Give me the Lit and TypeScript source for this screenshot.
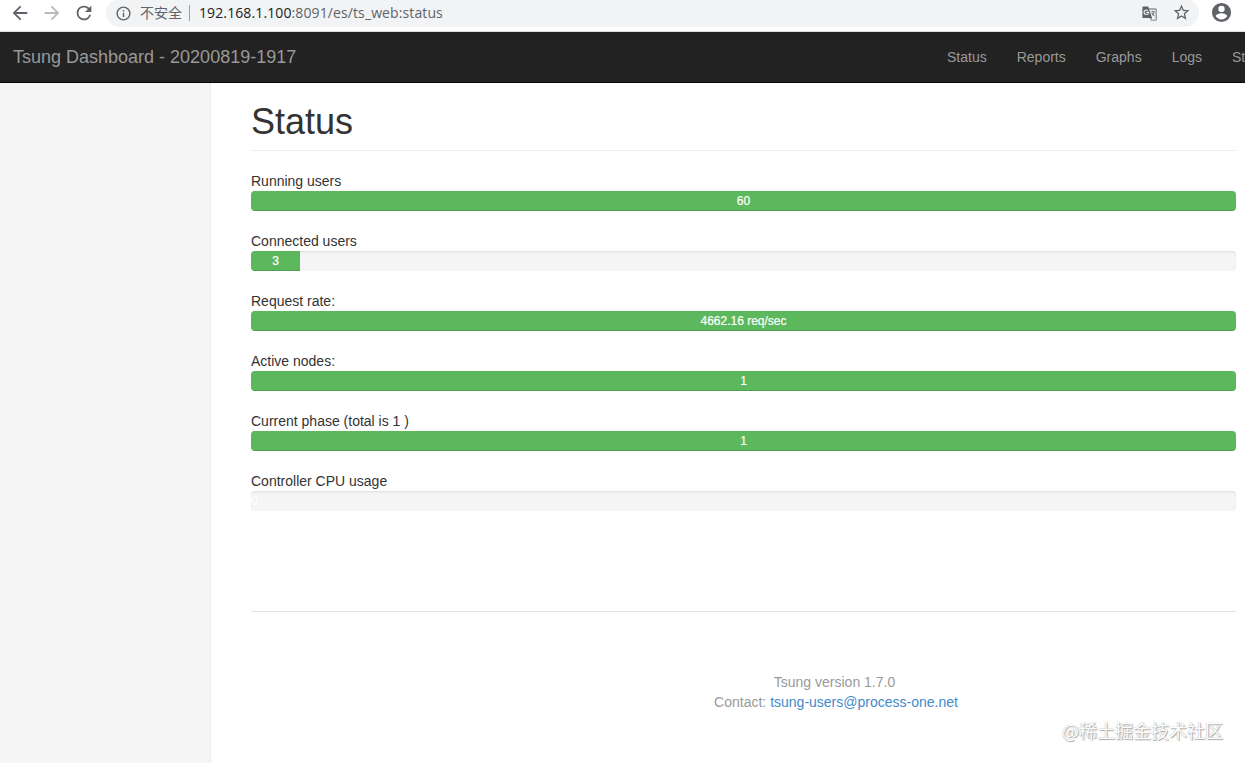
import { LitElement, html, css, svg } from "lit";
import { customElement, property } from "lit/decorators.js";

interface Metric {
  label: string;
  value: string;
  percent: number;
}

const METRICS: Metric[] = [
  { label: "Running users", value: "60", percent: 100 },
  { label: "Connected users", value: "3", percent: 5 },
  { label: "Request rate:", value: "4662.16 req/sec", percent: 100 },
  { label: "Active nodes:", value: "1", percent: 100 },
  { label: "Current phase (total is 1 )", value: "1", percent: 100 },
  { label: "Controller CPU usage", value: "0", percent: 0 },
];

const ICONS = {
  back: svg`<path d="M20 11H7.83l5.59-5.59L12 4l-8 8 8 8 1.41-1.41L7.83 13H20v-2z"/>`,
  forward: svg`<path d="M12 4l-1.41 1.41L16.17 11H4v2h12.17l-5.58 5.59L12 20l8-8z"/>`,
  reload: svg`<path d="M17.65 6.35A7.96 7.96 0 0 0 12 4a8 8 0 1 0 7.73 10h-2.08A6 6 0 1 1 12 6c1.66 0 3.14.69 4.22 1.78L13 11h7V4l-2.35 2.35z"/>`,
  info: svg`<path d="M11 7h2v2h-2zm0 4h2v6h-2zm1-9a10 10 0 1 0 0 20 10 10 0 0 0 0-20zm0 18a8 8 0 1 1 0-16 8 8 0 0 1 0 16z"/>`,
  star: svg`<path d="M22 9.24l-7.19-.62L12 2 9.19 8.63 2 9.24l5.46 4.73L5.82 21 12 17.27 18.18 21l-1.63-7.03L22 9.24zM12 15.4l-3.76 2.27 1-4.28-3.32-2.88 4.38-.38L12 6.1l1.71 4.04 4.38.38-3.32 2.88 1 4.28L12 15.4z"/>`,
  user: svg`<path d="M12 2a10 10 0 1 0 0 20 10 10 0 0 0 0-20zm0 3a3.3 3.3 0 1 1 0 6.6A3.3 3.3 0 0 1 12 5zm0 14.2a7.2 7.2 0 0 1-6-3.22c.03-1.99 4-3.08 6-3.08s5.97 1.09 6 3.08a7.2 7.2 0 0 1-6 3.22z"/>`,
  translate: svg`<path fill-rule="evenodd" d="M3 2h7.2l1 3H21a1 1 0 0 1 1 1v15a1 1 0 0 1-1 1h-7l-1.2-3.5H3a1 1 0 0 1-1-1V3a1 1 0 0 1 1-1zm8.6 4.2 4 12.3-1.8 2.3h7V6.2zM7.6 6.2a4 4 0 1 0 3.9 4.8v-1.4H7.6v1.6h2.2a2.4 2.4 0 1 1-.6-2.6l1.2-1.2a4 4 0 0 0-2.8-1.2z"/><path d="M13.6 10.1v-1h2.5V8h1.1v1.1H20v1h-1a8 8 0 0 1-1.6 3.1l2.1 2.1-.7.8-2.2-2.2-1 .9-.4-1.2.7-.6-1.2-1.7h1.1l.8 1a6 6 0 0 0 1.1-2.2z"/>`,
};

@customElement("ts-icon")
export class TsIcon extends LitElement {
  @property() name: keyof typeof ICONS = "back";

  static styles = css`
    :host { display: block; flex: none; }
    svg { display: block; width: 100%; height: 100%; fill: currentColor; }
  `;

  render() {
    return html`<svg viewBox="0 0 24 24">${ICONS[this.name]}</svg>`;
  }
}

@customElement("ts-meter")
export class TsMeter extends LitElement {
  @property({ attribute: false }) metric!: Metric;

  static styles = css`
    :host { display: block; margin-bottom: 20px; }
    .label { line-height: 20px; }
    .track {
      height: 20px;
      overflow: hidden;
      background: #f5f5f5;
      border-radius: 4px;
      box-shadow: inset 0 1px 2px rgba(0, 0, 0, 0.1);
    }
    .bar {
      height: 100%;
      font-size: 12px;
      line-height: 20px;
      color: #fff;
      text-align: center;
      white-space: nowrap;
      background: #5cb85c;
      box-shadow: inset 0 -1px 0 rgba(0, 0, 0, 0.15);
      -webkit-text-stroke: 0.2px #fff;
    }
  `;

  render() {
    const { label, value, percent } = this.metric;
    return html`
      <div class="label">${label}</div>
      <div class="track"><div class="bar" style="width:${percent}%">${value}</div></div>
    `;
  }
}

@customElement("app-root")
export class AppRoot extends LitElement {
  static styles = css`
    :host {
      display: flex;
      flex-direction: column;
      position: relative;
      height: 100vh;
      overflow: hidden;
      background: #fff;
      color: #333;
      font: 14px/20px "Liberation Sans", Arial, sans-serif;
    }
    .toolbar {
      display: flex;
      align-items: center;
      flex: none;
      box-sizing: border-box;
      height: 32px;
      padding: 0 13px 5px 9px;
      border-bottom: 1px solid #dcdee0;
      color: #5f6368;
    }
    .nav-icon { width: 22px; height: 22px; margin-right: 10px; }
    .off { color: #b9bbbe; }
    .omnibox {
      display: flex;
      align-items: center;
      flex: 1;
      height: 28px;
      margin: 0 11px 0 1px;
      padding: 0 8px 0 9px;
      border-radius: 14px;
      background: #f1f3f4;
      font-family: "Noto Sans", "Noto Sans CJK SC", sans-serif;
      white-space: nowrap;
    }
    .info { width: 17px; height: 17px; margin-right: 8px; }
    .insecure { font: 14px/20px "Noto Sans CJK SC", sans-serif; margin-top: -2px; }
    .sep { width: 1px; height: 16px; margin: 0 9px 0 7px; background: #9aa0a6; }
    .url { flex: 1; font-family: "Open Sans", sans-serif; letter-spacing: 0.11px; }
    .host { color: #202124; }
    .translate { width: 17px; height: 17px; margin-right: 14px; }
    .star { width: 19px; height: 19px; margin-top: -1px; }
    .user { width: 23px; height: 23px; margin-right: -1px; margin-top: -1px; }
    .navbar {
      display: flex;
      align-items: center;
      justify-content: space-between;
      flex: none;
      height: 50px;
      padding-left: 13px;
      background: #222;
      border-bottom: 1px solid #080808;
      color: #999;
      white-space: nowrap;
    }
    .brand { font-size: 18px; }
    .links { display: flex; gap: 30px; width: 298px; overflow: hidden; }
    .body { display: flex; flex: 1; min-height: 0; }
    .sidebar { flex: none; width: 210px; background: #f5f5f5; border-right: 1px solid #eee; }
    .main { flex: 1; min-width: 0; padding: 0 9px 0 40px; }
    h1 {
      margin: 0 0 20px;
      padding: 19px 0 9px;
      border-bottom: 1px solid #eee;
      font-size: 36px;
      font-weight: 500;
      line-height: 39px;
    }
    .footer {
      display: flex;
      flex-direction: column;
      align-items: center;
      margin-top: 100px;
      padding: 60px 0 0 185px;
      border-top: 1px solid #e2e2e2;
      color: #999;
    }
    .version { margin-right: 3px; }
    .mail { color: #428bca; text-decoration: none; }
    .watermark {
      position: absolute;
      right: 22px;
      bottom: 20px;
      font: 18px/26px "Noto Sans CJK SC", sans-serif;
      color: #fff;
      text-shadow: 0 0 1px #999, 1px 1px 1px #aaa;
    }
  `;

  render() {
    return html`
      <div class="toolbar">
        <ts-icon class="nav-icon" name="back"></ts-icon>
        <ts-icon class="nav-icon off" name="forward"></ts-icon>
        <ts-icon class="nav-icon" name="reload"></ts-icon>
        <div class="omnibox">
          <ts-icon class="info" name="info"></ts-icon>
          <span class="insecure">不安全</span>
          <span class="sep"></span>
          <span class="url"><span class="host">192.168.1.100</span>:8091/es/ts_web:status</span>
          <ts-icon class="translate" name="translate"></ts-icon>
          <ts-icon class="star" name="star"></ts-icon>
        </div>
        <ts-icon class="user" name="user"></ts-icon>
      </div>
      <nav class="navbar">
        <span class="brand">Tsung Dashboard - 20200819-1917</span>
        <div class="links">
          <span>Status</span><span>Reports</span><span>Graphs</span><span>Logs</span><span>Stop</span>
        </div>
      </nav>
      <div class="body">
        <aside class="sidebar"></aside>
        <main class="main">
          <h1>Status</h1>
          ${METRICS.map((m) => html`<ts-meter .metric=${m}></ts-meter>`)}
          <footer class="footer">
            <div class="version">Tsung version 1.7.0</div>
            <div>Contact: <a class="mail">tsung-users@process-one.net</a></div>
          </footer>
        </main>
      </div>
      <div class="watermark">@稀土掘金技术社区</div>
    `;
  }
}
